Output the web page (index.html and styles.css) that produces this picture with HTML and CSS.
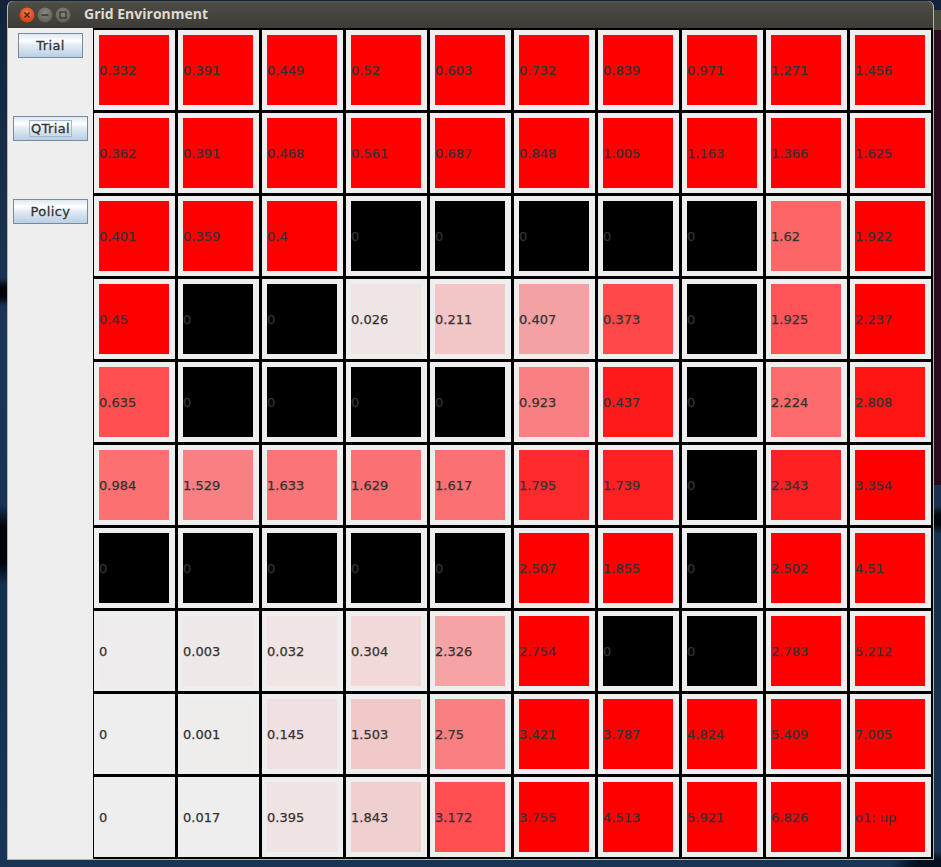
FILE: index.html
```html
<!DOCTYPE html>
<html lang="en">
<head>
<meta charset="utf-8">
<title>Grid Environment</title>
<link rel="stylesheet" href="styles.css">
</head>
<body>
<div class="back-window"><div class="back-title"></div></div>
<div class="window">
  <header class="titlebar">
    <div class="controls">
      <svg class="ctl" viewBox="0 0 18 18"><defs><radialGradient id="c" cx="50%" cy="35%" r="65%"><stop offset="0" stop-color="#f47a46"/><stop offset="1" stop-color="#cf3d12"/></radialGradient></defs><circle cx="9" cy="9" r="7.5" fill="url(#c)"/><path d="M6.5 6.5l5 5M11.5 6.5l-5 5" stroke="#4a1a08" stroke-width="1.4" fill="none"/></svg>
      <svg class="ctl" viewBox="0 0 18 18"><defs><radialGradient id="g" cx="50%" cy="35%" r="65%"><stop offset="0" stop-color="#8a887f"/><stop offset="1" stop-color="#5f5d55"/></radialGradient></defs><circle cx="9" cy="9" r="7.5" fill="url(#g)"/><path d="M5.5 9h7" stroke="#35342f" stroke-width="1.5" fill="none"/></svg>
      <svg class="ctl" viewBox="0 0 18 18"><circle cx="9" cy="9" r="7.5" fill="url(#g)"/><rect x="6" y="6" width="6" height="6" stroke="#35342f" stroke-width="1.3" fill="none"/></svg>
    </div>
    <span class="title">Grid Environment</span>
  </header>
  <div class="content">
    <aside class="sidebar">
      <button class="btn btn-small"><span class="label">Trial</span></button>
      <button class="btn"><span class="label focus">QTrial</span></button>
      <button class="btn"><span class="label">Policy</span></button>
    </aside>
    <main class="grid">
      <div class="cell"><div class="sq hot">0.332</div></div>
      <div class="cell"><div class="sq hot">0.391</div></div>
      <div class="cell"><div class="sq hot">0.449</div></div>
      <div class="cell"><div class="sq hot">0.52</div></div>
      <div class="cell"><div class="sq hot">0.603</div></div>
      <div class="cell"><div class="sq hot">0.732</div></div>
      <div class="cell"><div class="sq hot">0.839</div></div>
      <div class="cell"><div class="sq hot">0.971</div></div>
      <div class="cell"><div class="sq hot">1.271</div></div>
      <div class="cell"><div class="sq hot">1.456</div></div>

      <div class="cell"><div class="sq hot">0.362</div></div>
      <div class="cell"><div class="sq hot">0.391</div></div>
      <div class="cell"><div class="sq hot">0.468</div></div>
      <div class="cell"><div class="sq hot">0.561</div></div>
      <div class="cell"><div class="sq hot">0.687</div></div>
      <div class="cell"><div class="sq hot">0.848</div></div>
      <div class="cell"><div class="sq hot">1.005</div></div>
      <div class="cell"><div class="sq hot">1.163</div></div>
      <div class="cell"><div class="sq hot">1.366</div></div>
      <div class="cell"><div class="sq hot">1.625</div></div>

      <div class="cell"><div class="sq hot">0.401</div></div>
      <div class="cell"><div class="sq hot">0.359</div></div>
      <div class="cell"><div class="sq hot">0.4</div></div>
      <div class="cell"><div class="sq wall">0</div></div>
      <div class="cell"><div class="sq wall">0</div></div>
      <div class="cell"><div class="sq wall">0</div></div>
      <div class="cell"><div class="sq wall">0</div></div>
      <div class="cell"><div class="sq wall">0</div></div>
      <div class="cell"><div class="sq" style="background:#fd6666">1.62</div></div>
      <div class="cell"><div class="sq hot">1.922</div></div>

      <div class="cell"><div class="sq hot">0.45</div></div>
      <div class="cell"><div class="sq wall">0</div></div>
      <div class="cell"><div class="sq wall">0</div></div>
      <div class="cell"><div class="sq" style="background:#efe5e5">0.026</div></div>
      <div class="cell"><div class="sq" style="background:#f2c6c7">0.211</div></div>
      <div class="cell"><div class="sq" style="background:#f4a1a3">0.407</div></div>
      <div class="cell"><div class="sq" style="background:#fe4849">0.373</div></div>
      <div class="cell"><div class="sq wall">0</div></div>
      <div class="cell"><div class="sq" style="background:#ff5558">1.925</div></div>
      <div class="cell"><div class="sq hot">2.237</div></div>

      <div class="cell"><div class="sq" style="background:#ff4f50">0.635</div></div>
      <div class="cell"><div class="sq wall">0</div></div>
      <div class="cell"><div class="sq wall">0</div></div>
      <div class="cell"><div class="sq wall">0</div></div>
      <div class="cell"><div class="sq wall">0</div></div>
      <div class="cell"><div class="sq" style="background:#f98082">0.923</div></div>
      <div class="cell"><div class="sq" style="background:#ff1a1a">0.437</div></div>
      <div class="cell"><div class="sq wall">0</div></div>
      <div class="cell"><div class="sq" style="background:#fc6a6c">2.224</div></div>
      <div class="cell"><div class="sq" style="background:#ff1414">2.808</div></div>

      <div class="cell"><div class="sq" style="background:#fc7072">0.984</div></div>
      <div class="cell"><div class="sq" style="background:#f98082">1.529</div></div>
      <div class="cell"><div class="sq" style="background:#fb7578">1.633</div></div>
      <div class="cell"><div class="sq" style="background:#fb7173">1.629</div></div>
      <div class="cell"><div class="sq" style="background:#fb7072">1.617</div></div>
      <div class="cell"><div class="sq" style="background:#ff2a2b">1.795</div></div>
      <div class="cell"><div class="sq" style="background:#ff2022">1.739</div></div>
      <div class="cell"><div class="sq wall">0</div></div>
      <div class="cell"><div class="sq" style="background:#ff2022">2.343</div></div>
      <div class="cell"><div class="sq hot">3.354</div></div>

      <div class="cell"><div class="sq wall">0</div></div>
      <div class="cell"><div class="sq wall">0</div></div>
      <div class="cell"><div class="sq wall">0</div></div>
      <div class="cell"><div class="sq wall">0</div></div>
      <div class="cell"><div class="sq wall">0</div></div>
      <div class="cell"><div class="sq hot">2.507</div></div>
      <div class="cell"><div class="sq hot">1.855</div></div>
      <div class="cell"><div class="sq wall">0</div></div>
      <div class="cell"><div class="sq hot">2.502</div></div>
      <div class="cell"><div class="sq hot">4.51</div></div>

      <div class="cell"><div class="sq" style="background:#eeecec">0</div></div>
      <div class="cell"><div class="sq" style="background:#efe8e8">0.003</div></div>
      <div class="cell"><div class="sq" style="background:#f0e4e4">0.032</div></div>
      <div class="cell"><div class="sq" style="background:#f2d8d9">0.304</div></div>
      <div class="cell"><div class="sq" style="background:#f5a3a5">2.326</div></div>
      <div class="cell"><div class="sq hot">2.754</div></div>
      <div class="cell"><div class="sq wall">0</div></div>
      <div class="cell"><div class="sq wall">0</div></div>
      <div class="cell"><div class="sq hot">2.783</div></div>
      <div class="cell"><div class="sq hot">5.212</div></div>

      <div class="cell"><div class="sq">0</div></div>
      <div class="cell"><div class="sq" style="background:#efecec">0.001</div></div>
      <div class="cell"><div class="sq" style="background:#f0e0e1">0.145</div></div>
      <div class="cell"><div class="sq" style="background:#f2c9c9">1.503</div></div>
      <div class="cell"><div class="sq" style="background:#f98082">2.75</div></div>
      <div class="cell"><div class="sq hot">3.421</div></div>
      <div class="cell"><div class="sq hot">3.787</div></div>
      <div class="cell"><div class="sq hot">4.824</div></div>
      <div class="cell"><div class="sq hot">5.409</div></div>
      <div class="cell"><div class="sq hot">7.005</div></div>

      <div class="cell"><div class="sq">0</div></div>
      <div class="cell"><div class="sq">0.017</div></div>
      <div class="cell"><div class="sq" style="background:#f0e3e3">0.395</div></div>
      <div class="cell"><div class="sq" style="background:#f0cfcf">1.843</div></div>
      <div class="cell"><div class="sq" style="background:#ff4f50">3.172</div></div>
      <div class="cell"><div class="sq hot">3.755</div></div>
      <div class="cell"><div class="sq hot">4.513</div></div>
      <div class="cell"><div class="sq hot">5.921</div></div>
      <div class="cell"><div class="sq hot">6.826</div></div>
      <div class="cell"><div class="sq hot">o1: up</div></div>
    </main>
  </div>
</div>
</body>
</html>
```
FILE: styles.css
```css
* { box-sizing: border-box; }
html, body { margin: 0; height: 100%; }
body {
  position: relative;
  width: 941px;
  height: 867px;
  overflow: hidden;
  font-family: "DejaVu Sans", sans-serif;
  background:
    radial-gradient(ellipse 30px 14px at 2px 292px, #02060c 0 40%, transparent 100%),
    radial-gradient(ellipse 40px 40px at 0 545px, #01040a 0 45%, transparent 100%),
    radial-gradient(ellipse 40px 14px at 930px 865px, #04101e 0 40%, transparent 100%),
    radial-gradient(ellipse 20px 14px at 941px 520px, #02080f 0 40%, transparent 100%),
    linear-gradient(180deg, #14233c 0, #1c3657 40%, #14304f 70%, #183555 100%);
  padding: 1px 0 0 7px;
}
.back-window {
  position: absolute;
  left: 900px;
  top: 10px;
  width: 41px;
  height: 475px;
  background: #2c0a20;
}
.back-title {
  height: 20px;
  background: #4a4a3f;
}
.window {
  position: relative;
  width: 927px;
  height: 859px;
  display: flex;
  flex-direction: column;
  border-radius: 6px 6px 0 0;
  overflow: hidden;
  background: #eeeeee;
  border: solid #b4b4b0;
  border-width: 0 1px 1px 1px;
}
.titlebar {
  flex: none;
  height: 27px;
  margin: 0 -1px;
  padding-left: 11px;
  display: flex;
  align-items: center;
  background: linear-gradient(180deg, #5b5950 0, #4d4b44 10%, #3c3b37 100%);
}
.controls {
  display: flex;
  gap: 0;
  margin-top: 1px;
}
.ctl { width: 18px; height: 18px; display: block; }
.title {
  margin-left: 12px;
  margin-top: -2px;
  font-family: "Open Sans", sans-serif;
  font-weight: 700;
  font-size: 14px;
  color: #dfdbd2;
  white-space: nowrap;
}
.content {
  flex: 1;
  display: flex;
  min-height: 0;
}
.sidebar {
  width: 85px;
  flex: none;
  padding-top: 5px;
  display: flex;
  flex-direction: column;
  align-items: center;
  gap: 58px;
  background: #eeeeee;
}
.btn {
  width: 75px;
  height: 25px;
  padding: 0;
  display: flex;
  align-items: center;
  justify-content: center;
  border: 1px solid #7a8a99;
  background: linear-gradient(180deg, #dde8f3 0, #ffffff 30%, #e6eef6 45%, #b8cfe5 100%);
  font-family: "DejaVu Sans", sans-serif;
  font-weight: 400;
  font-size: 13px;
  letter-spacing: 0.4px;
  -webkit-text-stroke: 0.3px #333333;
  color: #333333;
}
.btn-small { width: 65px; }
.label { display: block; line-height: 15px; padding: 0 1px; }
.focus { outline: 1px solid #a3b8cc; }
.grid {
  width: 840px;
  flex: none;
  height: 831px;
  margin-right: -1px;
  background: #000000;
  padding: 2px 2px 2px 1px;
  display: grid;
  grid-template-columns: repeat(10, 81px);
  grid-template-rows: repeat(10, 80px);
  gap: 3px;
}
.cell {
  background: #eeeeee;
  padding: 5px 6px 5px 5px;
}
.sq {
  width: 70px;
  height: 70px;
  display: flex;
  align-items: center;
  white-space: nowrap;
  font-size: 13px;
  font-weight: 400;
  -webkit-text-stroke: 0.25px #333333;
  color: #333333;
}
.hot { background: #ff0000; }
.wall { background: #000000; }
```
